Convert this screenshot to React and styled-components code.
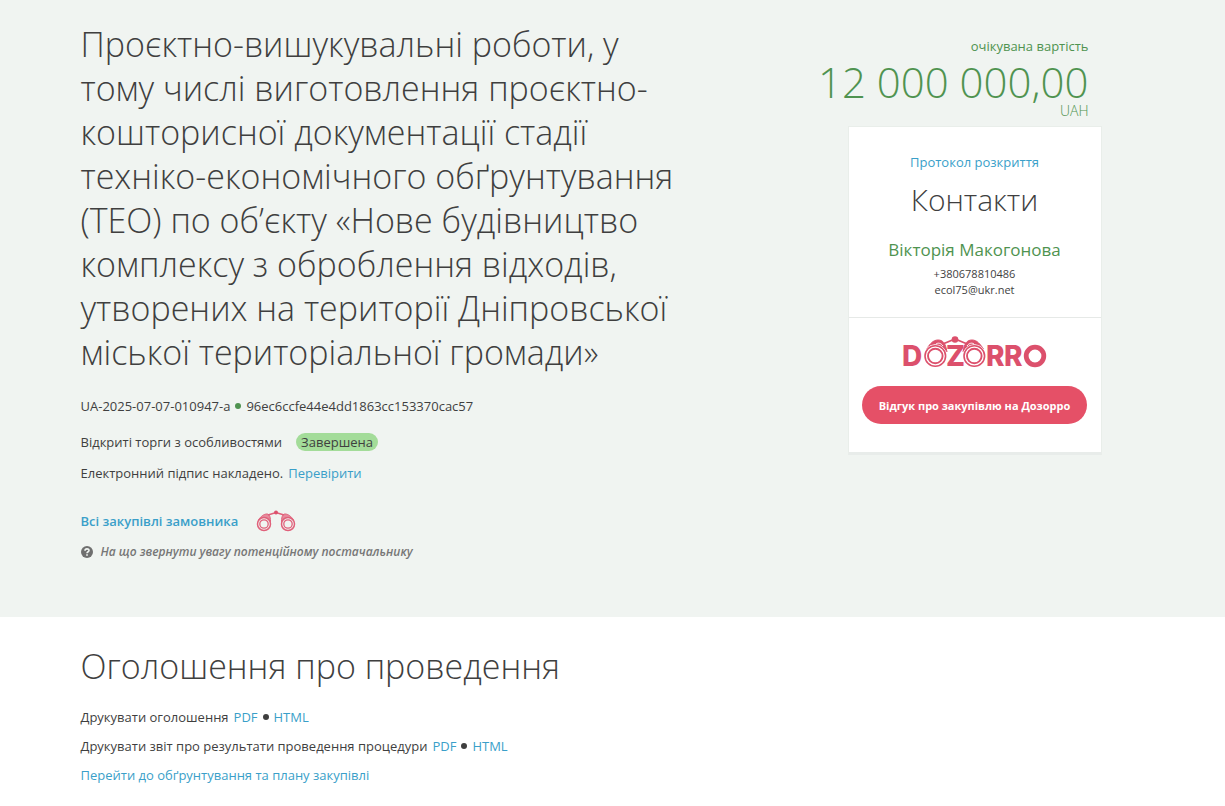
import React from 'react';
import styled, { createGlobalStyle } from 'styled-components';

const GlobalStyle = createGlobalStyle`
    * {
        box-sizing: border-box;
    }
    body {
        margin: 0;
        background: #fff;
        color: #3f3f3f;
        font-family: "Open Sans", "Noto Sans", sans-serif;
        font-size: 13px;
        line-height: 18px;
    }
    h1, h2, h3, p {
        margin: 0;
    }
`;

const Header = styled.header`
    background: #f0f4f1;
    padding: 22px 24px 56px;
`;

const Inner = styled.div`
    display: flex;
    justify-content: space-between;
    align-items: flex-start;
    max-width: 1064px;
    margin: 0 auto;
`;

const Main = styled.div`
    flex: 0 1 600px;
`;

const Title = styled.h1`
    font-size: 34px;
    font-weight: 300;
    line-height: 44px;
    margin-bottom: 23px;
`;

const Line = styled.p`
    display: flex;
    align-items: center;
    gap: ${({ $gap }) => $gap || 5}px;
    margin-bottom: ${({ $space }) => $space || 12}px;
`;

const Link = styled.a`
    color: #3a9fc9;
    font-weight: ${({ $strong }) => ($strong ? 600 : 400)};
    text-decoration: none;
    &:hover {
        text-decoration: underline;
    }
`;

const Dot = styled.span`
    width: 6px;
    height: 6px;
    border-radius: 50%;
    background: ${({ $color }) => $color || '#3f3f3f'};
`;

const Status = styled.span`
    padding: 0 5px;
    border-radius: 9px;
    background: #a3dc99;
`;

const Hint = styled.p`
    display: flex;
    align-items: center;
    gap: 8px;
    color: #777;
    font-size: 12px;
    font-style: italic;
    font-weight: 600;
`;

const Side = styled.aside`
    flex: 0 0 290px;
    margin-right: 43px;
    padding-top: 15px;
    display: flex;
    flex-direction: column;
    align-items: flex-end;
`;

const Price = styled.div`
    padding-right: 13px;
    color: #4f9350;
    text-align: right;
`;

const Amount = styled.div`
    margin-top: 7px;
    font-size: 42px;
    font-weight: 300;
    line-height: 40px;
    white-space: nowrap;
`;

const Currency = styled.div`
    font-size: 14px;
    font-weight: 300;
    line-height: 18px;
`;

const Card = styled.section`
    width: 254px;
    margin-top: 6px;
    background: #fff;
    border: 1px solid #e9eeea;
    border-bottom: 3px solid #e8ecea;
    text-align: center;
`;

const Contacts = styled.div`
    padding: 26px 12px 19px;
    border-bottom: 1px solid #e6e9e7;
`;

const CardTitle = styled.h2`
    font-size: 30px;
    font-weight: 300;
    line-height: 40px;
    margin: 9px 0 18px;
`;

const Person = styled.h3`
    color: #4f9350;
    font-size: 17px;
    font-weight: 400;
    line-height: 24px;
    margin-bottom: 4px;
`;

const Detail = styled.p`
    font-size: 11px;
    line-height: 16px;
`;

const Review = styled.div`
    display: flex;
    flex-direction: column;
    align-items: center;
    gap: 10px;
    padding: 16px 12px 28px;
`;

const ReviewButton = styled.button`
    width: 225px;
    height: 38px;
    border: 0;
    border-radius: 19px;
    background: #e55067;
    color: #fff;
    font-family: inherit;
    font-size: 11px;
    font-weight: 700;
    cursor: pointer;
`;

const Notice = styled.main`
    padding: 25px 24px;
`;

const NoticeInner = styled.div`
    max-width: 1064px;
    margin: 0 auto;
`;

const NoticeTitle = styled.h2`
    font-size: 34px;
    font-weight: 300;
    line-height: 48px;
    margin-bottom: 18px;
`;

const DozorroLogo = () => (
    <svg width="146" height="42" viewBox="0 0 146 42" role="img" aria-label="Dozorro">
        <g fill="none" stroke="#dc506c">
            <path d="M42 9.5 L53 5 L64 9.5" strokeWidth="1.8" />
            <path d="M24.5 15 C28 10 31 6 36 6 C41 6 43.5 9 45 18 M81.5 15 C78 10 75 6 70 6 C65 6 62.5 9 61 18" fill="#dc506c" strokeWidth="1" />
            <path d="M34 10 C36 8.5 39 9 41 12 M72 10 C70 8.5 67 9 65 12" stroke="#fff" strokeWidth="1" />
            <circle cx="33.3" cy="22" r="11.3" fill="#fff" stroke="#fff" strokeWidth="1" />
            <circle cx="72.3" cy="22" r="11.3" fill="#fff" stroke="#fff" strokeWidth="1" />
            <circle cx="33.3" cy="22" r="10.3" strokeWidth="1.6" />
            <circle cx="72.3" cy="22" r="10.3" strokeWidth="1.6" />
            <circle cx="33.3" cy="22" r="7.3" strokeWidth="1.9" />
            <circle cx="72.3" cy="22" r="7.3" strokeWidth="1.9" />
        </g>
        <circle cx="53" cy="5.5" r="3.3" fill="#dc506c" />
        <g fill="#dc506c" fontFamily="Inter, sans-serif" fontSize="28" fontWeight="800">
            <text x="0" y="32">D</text>
            <text x="44" y="32">Z</text>
            <text x="84" y="32">R</text>
            <text x="102" y="32">R</text>
        </g>
        <circle cx="133" cy="22" r="8.8" fill="none" stroke="#dc506c" strokeWidth="4.8" />
    </svg>
);

const Binoculars = () => (
    <svg width="40" height="22" viewBox="0 0 40 22" aria-hidden="true">
        <g fill="none" stroke="#e0607a">
            <path d="M2.5 10 C5 6 8 4 11 4 C14 4 14.5 8 14.5 13 M37.5 10 C35 6 32 4 29 4 C26 4 25.5 8 25.5 13" fill="#e68a9c" strokeWidth="1" />
            <path d="M12 5 L20 2.5 L28 5" strokeWidth="1.5" />
            <circle cx="8" cy="14" r="6.5" fill="#f0f4f1" strokeWidth="1.5" />
            <circle cx="32" cy="14" r="6.5" fill="#f0f4f1" strokeWidth="1.5" />
            <circle cx="8" cy="14" r="4.2" strokeWidth="1.3" />
            <circle cx="32" cy="14" r="4.2" strokeWidth="1.3" />
        </g>
        <circle cx="20" cy="2.5" r="2" fill="#dc506c" />
    </svg>
);

const QuestionIcon = () => (
    <svg width="12" height="12" viewBox="0 0 12 12" aria-hidden="true">
        <circle cx="6" cy="6" r="6" fill="#6f6f6f" />
        <path d="M4 4.7 C4 2.3 8 2.3 8 4.5 C8 5.9 6 5.7 6 7.3" fill="none" stroke="#f0f4f1" strokeWidth="1.6" />
        <rect x="5.2" y="8.2" width="1.6" height="1.6" fill="#f0f4f1" />
    </svg>
);

const PrintLine = ({ label }) => (
    <Line $space={11}>
        <span>{label}</span>
        <Link href="#pdf">PDF</Link>
        <Dot />
        <Link href="#html">HTML</Link>
    </Line>
);

const App = () => {
    return (
        <>
            <GlobalStyle />
            <Header>
                <Inner>
                    <Main>
                        <Title>
                            Проєктно-вишукувальні роботи, у тому числі виготовлення проєктно-кошторисної
                            документації стадії техніко-економічного обґрунтування (ТЕО) по об’єкту «Нове
                            будівництво комплексу з оброблення відходів, утворених на території
                            Дніпровської міської територіальної громади»
                        </Title>
                        <Line $space={18}>
                            <span>UA-2025-07-07-010947-a</span>
                            <Dot $color="#4f9350" />
                            <span>96ec6ccfe44e4dd1863cc153370cac57</span>
                        </Line>
                        <Line $gap={14} $space={13}>
                            <span>Відкриті торги з особливостями</span>
                            <Status>Завершена</Status>
                        </Line>
                        <Line $space={28}>
                            <span>Електронний підпис накладено.</span>
                            <Link href="#verify">Перевірити</Link>
                        </Line>
                        <Line $gap={18} $space={11}>
                            <Link href="#all" $strong>Всі закупівлі замовника</Link>
                            <Binoculars />
                        </Line>
                        <Hint>
                            <QuestionIcon />
                            На що звернути увагу потенційному постачальнику
                        </Hint>
                    </Main>
                    <Side>
                        <Price>
                            <div>очікувана вартість</div>
                            <Amount>12 000 000,00</Amount>
                            <Currency>UAH</Currency>
                        </Price>
                        <Card>
                            <Contacts>
                                <Link href="#protocol">Протокол розкриття</Link>
                                <CardTitle>Контакти</CardTitle>
                                <Person>Вікторія Макогонова</Person>
                                <Detail>+380678810486</Detail>
                                <Detail>ecol75@ukr.net</Detail>
                            </Contacts>
                            <Review>
                                <DozorroLogo />
                                <ReviewButton type="button">Відгук про закупівлю на Дозорро</ReviewButton>
                            </Review>
                        </Card>
                    </Side>
                </Inner>
            </Header>
            <Notice>
                <NoticeInner>
                    <NoticeTitle>Оголошення про проведення</NoticeTitle>
                    <PrintLine label="Друкувати оголошення" />
                    <PrintLine label="Друкувати звіт про результати проведення процедури" />
                    <Link href="#plan">Перейти до обґрунтування та плану закупівлі</Link>
                </NoticeInner>
            </Notice>
        </>
    );
};

export default App;
